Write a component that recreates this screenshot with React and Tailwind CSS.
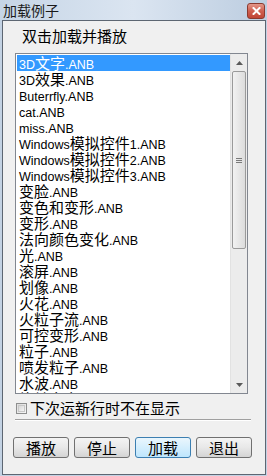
import React from "react";

const items = [
  "3D文字.ANB",
  "3D效果.ANB",
  "Buterrfly.ANB",
  "cat.ANB",
  "miss.ANB",
  "Windows模拟控件1.ANB",
  "Windows模拟控件2.ANB",
  "Windows模拟控件3.ANB",
  "变脸.ANB",
  "变色和变形.ANB",
  "变形.ANB",
  "法向颜色变化.ANB",
  "光.ANB",
  "滚屏.ANB",
  "划像.ANB",
  "火花.ANB",
  "火粒子流.ANB",
  "可控变形.ANB",
  "粒子.ANB",
  "喷发粒子.ANB",
  "水波.ANB",
  "旋转文字.ANB",
];

function Mixed({ text }) {
  const parts = text.match(/[\u4e00-\u9fff]+|[^\u4e00-\u9fff]+/g) || [];
  return parts.map((p, i) =>
    /[\u4e00-\u9fff]/.test(p) ? (
      <span key={i} className="text-[15px] leading-[15px] font-['Noto_Sans_CJK_SC',sans-serif]">
        {p}
      </span>
    ) : (
      <span key={i} className="text-[12.5px] leading-[15px] font-['Liberation_Sans',sans-serif]">
        {p}
      </span>
    )
  );
}

function Btn({ label, focused }) {
  return (
    <div
      className={
        "w-[56px] h-[21px] rounded-[3px] border flex items-center justify-center text-[15px] leading-none text-black font-['Noto_Sans_CJK_SC',sans-serif] " +
        (focused
          ? "border-[#3c7fb1] bg-linear-to-b from-[#eaf6fd] to-[#bee6fd]"
          : "border-[#707070] bg-linear-to-b from-[#f4f4f4] via-[#e8e8e8] to-[#d4d4d4]")
      }
    >
      {label}
    </div>
  );
}

export default function App() {
  return (
    <div className="w-[267px] h-[476px] bg-[#c3d2e3] flex flex-col overflow-hidden">
      {/* title bar */}
      <div className="h-[20px] shrink-0 flex items-center justify-between bg-linear-to-r from-[#c6d5e6] via-[#dbe5f1] to-[#bccde0]">
        <span className="pl-[3px] text-[14px] leading-none text-[#1a1a1a] font-['Noto_Sans_CJK_SC',sans-serif]">
          加载例子
        </span>
        <div className="mr-[2px] mt-[1px] w-[18px] h-[16px] rounded-[3px] border border-[#8a3a30] bg-linear-to-b from-[#e3978a] via-[#cf5f50] to-[#c04535] flex items-center justify-center">
          <svg width="9" height="8" viewBox="0 0 9 8">
            <path d="M1.5 1 L7.5 7 M7.5 1 L1.5 7" stroke="white" strokeWidth="2" strokeLinecap="square" />
          </svg>
        </div>
      </div>

      {/* client area */}
      <div className="ml-[2px] mr-[1px] mb-[1px] flex-1 border border-[#5d6672] bg-[#f0f0f0] flex flex-col">
        <div className="pl-[19px] pt-[6px] h-[32px] text-[15px] leading-[18px] text-black font-['Noto_Sans_CJK_SC',sans-serif]">
          双击加载并播放
        </div>

        {/* listbox */}
        <div className="ml-[12px] w-[233px] h-[341px] border border-[#828790] bg-white flex overflow-hidden">
          <div className="flex-1 pt-[1px] pl-[1px] overflow-hidden">
            {items.map((t, i) => (
              <div
                key={i}
                className={
                  "h-[16px] leading-[16px] pl-[2px] whitespace-nowrap " +
                  (i === 0 ? "bg-[#3399ff] text-white" : "text-black")
                }
              >
                <Mixed text={t} />
              </div>
            ))}
          </div>
          {/* scrollbar */}
          <div className="w-[17px] shrink-0 bg-[#ececec] border-l border-[#e2e2e2] flex flex-col items-center">
            <div className="h-[17px] w-full flex items-center justify-center">
              <svg width="7" height="4" viewBox="0 0 7 4">
                <path d="M0 4 L3.5 0 L7 4 Z" fill="#5a5a5a" />
              </svg>
            </div>
            <div className="w-[14px] h-[178px] rounded-[2px] border border-[#9a9a9a] bg-linear-to-r from-[#f2f2f2] to-[#dcdcdc] flex items-center justify-center">
              <div className="flex flex-col gap-[1px]">
                <div className="w-[6px] h-[1px] bg-[#7a7a7a]" />
                <div className="w-[6px] h-[1px] bg-[#7a7a7a]" />
                <div className="w-[6px] h-[1px] bg-[#7a7a7a]" />
              </div>
            </div>
            <div className="flex-1" />
            <div className="h-[17px] w-full flex items-center justify-center">
              <svg width="7" height="4" viewBox="0 0 7 4">
                <path d="M0 0 L7 0 L3.5 4 Z" fill="#5a5a5a" />
              </svg>
            </div>
          </div>
        </div>

        {/* checkbox */}
        <div className="mt-[5px] ml-[13px] h-[18px] flex items-center gap-[3px]">
          <div className="w-[11px] h-[11px] border border-[#8e8f8f] bg-linear-to-br from-[#dcdcdc] to-[#f6f6f6] p-[1px]">
            <div className="w-full h-full border border-[#c8c8c8] bg-linear-to-br from-[#d8d8d8] to-[#f4f4f4]" />
          </div>
          <span className="text-[15px] leading-[18px] text-black font-['Noto_Sans_CJK_SC',sans-serif]">
            下次运新行时不在显示
          </span>
        </div>

        {/* separator */}
        <div className="mt-[2px] ml-[12px] w-[236px] h-[2px] border-t border-[#a0a0a0] border-b border-b-white" />

        {/* buttons */}
        <div className="mt-[16px] ml-[10px] flex gap-[5px]">
          <Btn label="播放" />
          <Btn label="停止" />
          <Btn label="加载" focused />
          <Btn label="退出" />
        </div>
      </div>
    </div>
  );
}
